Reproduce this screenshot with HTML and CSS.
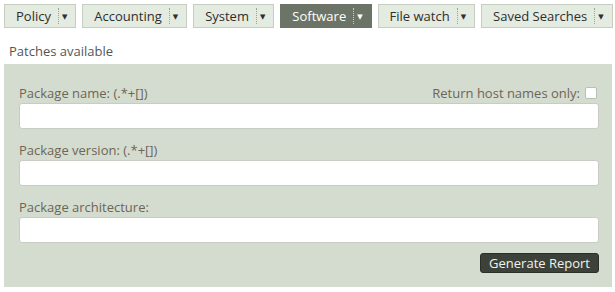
FILE: index.html
```html
<!DOCTYPE html>
<html lang="en">
  <head>
    <meta charset="UTF-8" />
    <title>Patches available</title>
    <link rel="stylesheet" href="styles.css">
  </head>
  <body>
    <nav class="tabs">
      <div class="tab"><span class="tab-label">Policy</span><span class="tab-drop">&#9660;</span></div>
      <div class="tab"><span class="tab-label">Accounting</span><span class="tab-drop">&#9660;</span></div>
      <div class="tab"><span class="tab-label">System</span><span class="tab-drop">&#9660;</span></div>
      <div class="tab active"><span class="tab-label">Software</span><span class="tab-drop">&#9660;</span></div>
      <div class="tab"><span class="tab-label">File watch</span><span class="tab-drop">&#9660;</span></div>
      <div class="tab"><span class="tab-label">Saved Searches</span><span class="tab-drop">&#9660;</span></div>
    </nav>

    <h2 class="page-title">Patches available</h2>

    <form class="report-panel">
      <div class="field">
        <div class="field-head">
          <label for="pkg-name">Package name: (.*+[])</label>
          <label class="host-only">Return host names only: <input type="checkbox" /></label>
        </div>
        <input type="text" id="pkg-name" />
      </div>

      <div class="field">
        <div class="field-head">
          <label for="pkg-version">Package version: (.*+[])</label>
        </div>
        <input type="text" id="pkg-version" />
      </div>

      <div class="field">
        <div class="field-head">
          <label for="pkg-arch">Package architecture:</label>
        </div>
        <input type="text" id="pkg-arch" />
      </div>

      <div class="actions">
        <button type="button">Generate Report</button>
      </div>
    </form>
  </body>
</html>
```

FILE: styles.css
```css
* {
  margin: 0;
  padding: 0;
  box-sizing: border-box;
}

body {
  font-family: "Open Sans", "DejaVu Sans", sans-serif;
  font-size: 13px;
  color: #333;
  background: white;
  padding: 4px 3px 0 4px;
}

.tabs {
  display: flex;
  gap: 6px;
}

.tab {
  display: flex;
  align-items: center;
  flex-shrink: 0;
  white-space: nowrap;
  height: 24px;
  padding: 0 8px 0 11px;
  background: #e4ebe1;
  border: 1px solid #c6cec3;
  color: #2e2e2e;
}

.tab-label {
  padding-right: 7px;
  margin-right: 3px;
  border-right: 1px dotted #9aa396;
  line-height: 16px;
}

.tab-drop {
  font-size: 7px;
}

.tab.active {
  background: #6c7467;
  border-color: #6c7467;
  color: white;
}

.tab.active .tab-label {
  border-right-color: #c8cec4;
}

.page-title {
  font-size: 13px;
  font-weight: normal;
  color: #555;
  padding: 14px 0 0 5px;
  height: 36px;
}

.report-panel {
  background: #d4dcd0;
  height: 223px;
  padding: 18px 13px 0 15px;
  display: flex;
  flex-direction: column;
  gap: 10px;
}

.field-head {
  display: flex;
  justify-content: space-between;
  align-items: center;
  color: #6e6555;
  height: 21px;
}

.host-only {
  display: flex;
  align-items: center;
  gap: 5px;
}

.host-only input {
  appearance: none;
  width: 12px;
  height: 12px;
  background: white;
  border: 1px solid #b8bfb5;
  border-radius: 2px;
  margin-right: 2px;
}

.field input[type="text"] {
  display: block;
  width: 100%;
  height: 26px;
  border: 1px solid #c7cdc4;
  border-radius: 3px;
  background: white;
}

.actions {
  display: flex;
  justify-content: flex-end;
}

button {
  background: #3c4239;
  color: #f0f2ee;
  border: 1px solid #2a2f28;
  border-radius: 3px;
  height: 20px;
  padding: 0 8px;
  font-family: inherit;
  font-size: 13px;
  line-height: 18px;
  white-space: nowrap;
}
```
